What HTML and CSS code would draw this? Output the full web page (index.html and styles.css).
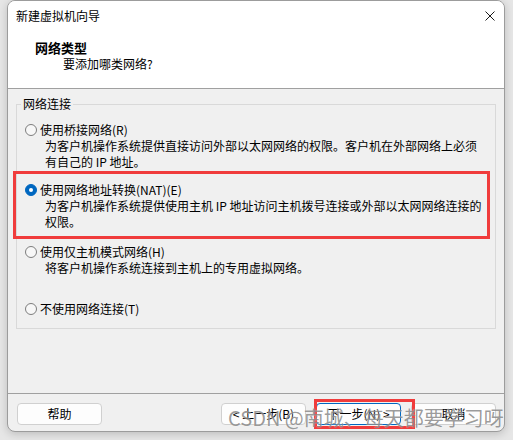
FILE: index.html
```html
<!DOCTYPE html>
<html lang="zh-CN">
<head>
<meta charset="utf-8">
<link rel="stylesheet" href="styles.css">
</head>
<body>
<div class="window">
  <header class="head">
    <div class="titlebar">
      <span class="title">新建虚拟机向导</span>
      <svg class="close" width="10" height="10" viewBox="0 0 10 10"><path d="M0.5 0.5 L9.5 9.5 M9.5 0.5 L0.5 9.5" stroke="#1a1a1a" stroke-width="1" fill="none"/></svg>
    </div>
    <div class="heading">网络类型</div>
    <div class="subheading">要添加哪类网络?</div>
  </header>
  <main class="body">
    <fieldset class="group">
      <legend>网络连接</legend>
      <div class="option first">
        <div class="opt-row"><span class="radio"></span><span>使用桥接网络(R)</span></div>
        <div class="desc">为客户机操作系统提供直接访问外部以太网网络的权限。客户机在外部网络上必须<br>有自己的 IP 地址。</div>
      </div>
      <div class="option highlight">
        <div class="opt-row"><span class="radio checked"></span><span>使用网络地址转换(NAT)(E)</span></div>
        <div class="desc">为客户机操作系统提供使用主机 IP 地址访问主机拨号连接或外部以太网网络连接的<br>权限。</div>
      </div>
      <div class="option third">
        <div class="opt-row"><span class="radio"></span><span>使用仅主机模式网络(H)</span></div>
        <div class="desc">将客户机操作系统连接到主机上的专用虚拟网络。</div>
      </div>
      <div class="option fourth">
        <div class="opt-row"><span class="radio"></span><span>不使用网络连接(T)</span></div>
      </div>
    </fieldset>
  </main>
  <footer class="foot">
    <button class="btn">帮助</button>
    <div class="spacer"></div>
    <button class="btn">&lt; 上一步(B)</button>
    <div class="next-wrap">
      <button class="btn primary">下一步(N) &gt;</button>
      <span class="mark"></span>
    </div>
    <button class="btn">取消</button>
  </footer>
</div>
<div class="watermark">CSDN @南城、每天都要学习呀</div>
</body>
</html>
```
FILE: styles.css
```css
* { box-sizing: border-box; }
html, body { margin: 0; }
body {
  width: 513px;
  height: 440px;
  overflow: hidden;
  background: #e6e6e6;
  padding: 0 0 0 7px;
  font-family: "Noto Sans CJK SC", "Liberation Sans", sans-serif;
  font-size: 12px;
  line-height: 16px;
  color: #000;
  position: relative;
}
.window {
  width: 498px;
  height: 432px;
  border: 1px solid #9c9c9c;
  border-radius: 8px;
  overflow: hidden;
  background: #f0f0f0;
  display: flex;
  flex-direction: column;
  box-shadow: 0 2px 8px rgba(0,0,0,0.18);
}
.head {
  background: #fff;
  height: 88px;
  flex: none;
  border-bottom: 1px solid #a0a0a0;
}
.titlebar {
  height: 30px;
  display: flex;
  align-items: center;
  justify-content: space-between;
  padding: 0 9px 0 8px;
}
.title { line-height: 16px; }
.close { display: block; }
.heading {
  margin-top: 9px;
  padding-left: 27px;
  font-weight: bold;
  font-size: 13px;
}
.subheading { padding-left: 55px; }
.body {
  flex: 1;
  padding-top: 7px;
}
.group {
  margin: 0 8px 0 8px;
  padding: 10px 0 11px 0;
  border: 1px solid #d9d9d9;
  min-width: 0;
}
.group legend {
  margin-left: 4px;
  padding: 0 2px;
  line-height: 16px;
}
.option { padding-left: 8px; }
.opt-row {
  display: flex;
  align-items: center;
  gap: 3px;
  height: 16px;
}
.radio {
  width: 12px;
  height: 12px;
  border-radius: 50%;
  border: 1px solid #7d7d7d;
  background: #f7f7f7;
  flex: none;
  display: flex;
  align-items: center;
  justify-content: center;
}
.radio.checked {
  background: #0067c0;
  border-color: #0067c0;
}
.radio.checked::after {
  content: "";
  width: 4px;
  height: 4px;
  border-radius: 50%;
  background: #fff;
}
.desc { padding-left: 20px; }
.highlight {
  margin: 1px 5px 0 -4px;
  border: 3px solid #f03c3c;
  padding: 8px 0 6px 9px;
}
.third { margin-top: 5px; }
.fourth { margin-top: 25px; }
.foot {
  height: 38px;
  flex: none;
  border-top: 1px solid #a0a0a0;
  padding: 9px 8px 0 9px;
  display: flex;
  align-items: flex-start;
  gap: 10px;
}
.spacer { flex: 1; }
.btn {
  width: 85px;
  height: 22px;
  border: 1px solid #d0d0d0;
  border-radius: 4px;
  background: #fdfdfd;
  font-family: inherit;
  font-size: 12px;
  line-height: 16px;
  padding: 0;
  color: #000;
}
.btn.primary { border-color: #0067c0; }
.next-wrap { position: relative; }
.next-wrap .btn { display: block; }
.mark {
  position: absolute;
  left: -2px;
  top: -4px;
  width: 101px;
  height: 30px;
  border: 3px solid #f03c3c;
}
.watermark {
  position: absolute;
  left: 228px;
  top: 405px;
  font-size: 20px;
  line-height: 26px;
  color: rgba(70, 70, 70, 0.55);
  text-shadow: 0 0 1px rgba(255,255,255,0.8);
  white-space: nowrap;
}
```
